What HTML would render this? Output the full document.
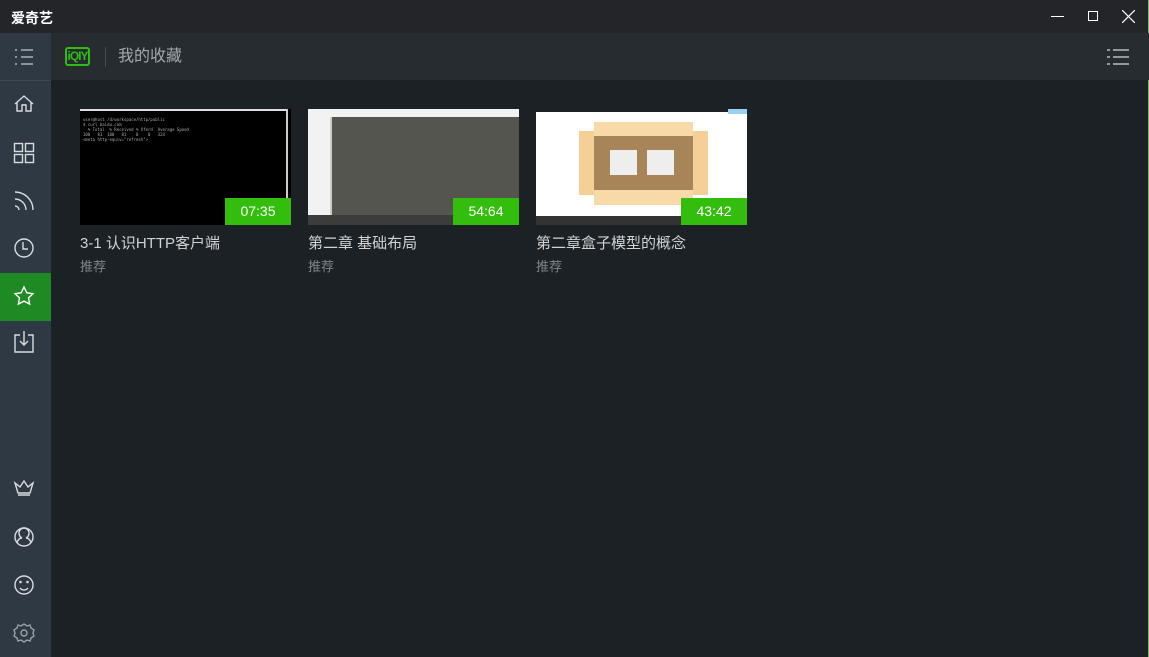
<!DOCTYPE html>
<html><head><meta charset="utf-8"><style>
*{margin:0;padding:0;box-sizing:border-box}
body{width:1149px;height:657px;overflow:hidden;background:#1c2125;font-family:"Liberation Sans","Noto Sans CJK SC",sans-serif;position:relative}
.title{position:absolute;left:0;top:0;width:1149px;height:33px;background:#232528;color:#fff;font-size:14px;font-weight:bold}
.side{position:absolute;left:0;top:33px;width:51px;height:624px;background:#2f3943}
.hdr{position:absolute;left:51px;top:33px;width:1098px;height:47px;background:#272c30}
.card{position:absolute;top:109px;width:211px}
.th{width:211px;height:116px;position:relative;overflow:hidden}
.badge{position:absolute;right:0;bottom:0;width:66px;height:27px;background:#33bd0c;color:#fff;font-size:14px;text-align:center;line-height:27px}
.t1{color:#d2d2d2;font-size:15px;margin-top:7px}
.t2{color:#7f8488;font-size:13px;margin-top:3px}
</style></head><body>
<div class="title"><span style="position:absolute;left:11px;top:8px">爱奇艺</span>
<div style="position:absolute;left:1051px;top:16px;width:13px;height:1px;background:#fff"></div>
<div style="position:absolute;left:1088px;top:11px;width:10px;height:10px;border:1px solid #fff"></div>
<svg style="position:absolute;left:1122px;top:10px" width="13" height="13"><path d="M0 0L13 13M13 0L0 13" stroke="#fff" stroke-width="1.2"/></svg>
</div>
<div style="position:absolute;right:0;top:0;width:1px;height:657px;background:#7bbf6a"></div>
<div class="side">
<div style="position:absolute;left:0;top:47px;width:51px;height:1px;background:#3e4852"></div>
<div style="position:absolute;left:0;top:240px;width:51px;height:48px;background:#1f8a24"></div>
</div>
<svg style="position:absolute;left:0;top:33px" width="51" height="624" fill="none" stroke="#d8dcdf" stroke-width="1.4">
<g stroke="#aab0b6"><path d="M15 17h2M21 17h12M15 24h2M21 24h12M15 31h2M21 31h12"/></g>
<path d="M15 71l9-8 9 8M17 69v9h5v-6h4v6h5v-9"/>
<rect x="14.5" y="110.5" width="8" height="8"/><rect x="25.5" y="110.5" width="8" height="8"/><rect x="14.5" y="121.5" width="8" height="8"/><rect x="25.5" y="121.5" width="8" height="8"/>
<path d="M15 159a18 18 0 0 1 18 18M15 166a11 11 0 0 1 11 11M15 173a4 4 0 0 1 4 4"/>
<circle cx="24" cy="215" r="9"/><path d="M23 209v7h5"/>
<path d="M24 254l2.8 5.8 6.2.8-4.5 4.3 1.1 6.2-5.6-3-5.6 3 1.1-6.2-4.5-4.3 6.2-.8z" stroke="#fff"/>
<path d="M20 302h-5v17h18v-17h-5M24 298v14M20 308l4 4 4-4"/>
<path d="M15 450l3 10h12l3-10-5 4-4-6-4 6zM18 462h12"/>
<circle cx="24" cy="504" r="9"/><path d="M17 510c1-4 3-5 5-5 -2-1-3-3-3-5a5 5 0 0 1 10 0c0 2-1 4-3 5 2 0 4 1 5 5"/>
<circle cx="24" cy="552" r="9"/><path d="M20 555a5 5 0 0 0 8 0"/><circle cx="20.5" cy="549" r=".6"/><circle cx="27.5" cy="549" r=".6"/>
<g stroke="#9aa0a6"><path d="M24 591l3 2 3-1 1 3 3 2-1 3 1 3-3 2-1 3-3-1-3 2-3-2-3 1-1-3-3-2 1-3-1-3 3-2 1-3 3 1z"/><circle cx="24" cy="600" r="3"/></g>
</svg>
<div class="hdr">
<div style="position:absolute;left:14px;top:14px;width:25px;height:19px;border:2px solid #2ebd12;border-radius:3px;color:#2ebd12;font-size:12px;font-weight:bold;line-height:15px;text-align:center;letter-spacing:-1px">iQIY</div>
<div style="position:absolute;left:54px;top:14px;width:1px;height:20px;background:#454b50"></div>
<span style="position:absolute;left:67px;top:14px;color:#a3a8ac;font-size:16px;line-height:20px">我的收藏</span>
<svg style="position:absolute;left:1055px;top:16px" width="24" height="16" stroke="#b8bcbf" stroke-width="1.4"><path d="M1 1h3M7 1h16M1 8h3M7 8h16M1 15h3M7 15h16"/></svg>
</div>
<div class="card" style="left:80px"><div class="th" style="background:#000">
<div style="height:2px;background:#ddd;width:206px"></div>
<div style="position:absolute;right:3px;top:0;width:2px;height:116px;background:#ccc"></div>
<div style="position:absolute;left:3px;top:8px;font:4px monospace;color:#aaa;line-height:5px;white-space:pre">user@host /d/workspace/http/public
$ curl baidu.com
  % Total  % Received % Xferd  Average Speed
100   81  100   81    0    0   324
&lt;meta http-equiv="refresh"&gt;</div>
<div class="badge">07:35</div></div>
<div class="t1">3-1 认识HTTP客户端</div><div class="t2">推荐</div></div>
<div class="card" style="left:308px"><div class="th" style="background:#f2f2f2">
<div style="position:absolute;left:22px;top:8px;width:189px;height:98px;background:#55554f;border-left:2px solid #ccc"></div>
<div style="position:absolute;left:0;top:106px;width:211px;height:10px;background:#3c3c3c"></div>
<div class="badge">54:64</div></div>
<div class="t1">第二章 基础布局</div><div class="t2">推荐</div></div>
<div class="card" style="left:536px"><div class="th" style="background:#1c2125">
<div style="position:absolute;left:0;top:3px;width:211px;height:104px;background:#fff"></div>
<div style="position:absolute;left:192px;top:0;width:19px;height:5px;background:#9cd0f0"></div>
<div style="position:absolute;left:43px;top:22px;width:129px;height:64px;background:#f5cf96"></div>
<div style="position:absolute;left:58px;top:13px;width:99px;height:83px;background:#f8d9a8"></div>
<div style="position:absolute;left:58px;top:27px;width:99px;height:54px;background:#a88459"></div>
<div style="position:absolute;left:74px;top:41px;width:27px;height:25px;background:#eee"></div>
<div style="position:absolute;left:111px;top:41px;width:27px;height:25px;background:#eee"></div>
<div style="position:absolute;left:0;top:107px;width:211px;height:9px;background:#333"></div>
<div class="badge">43:42</div></div>
<div class="t1">第二章盒子模型的概念</div><div class="t2">推荐</div></div>
</body></html>
